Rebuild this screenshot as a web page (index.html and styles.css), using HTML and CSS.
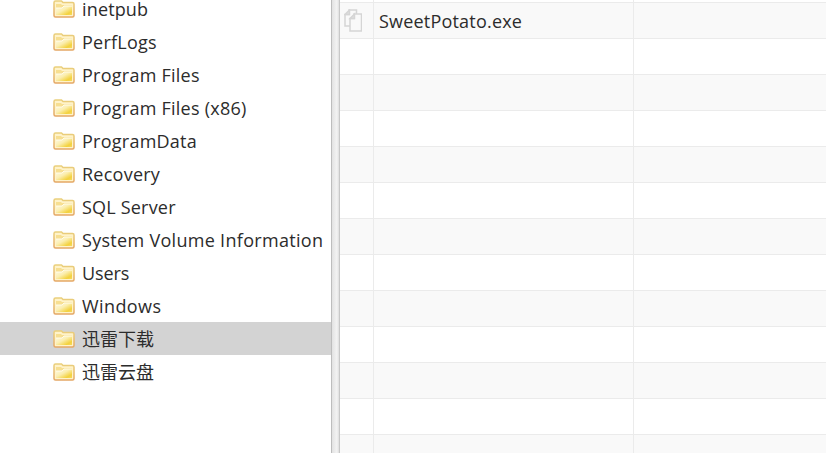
FILE: index.html
```
<!DOCTYPE html>
<html lang="zh"><head><meta charset="utf-8"><title>Files</title><link rel="stylesheet" href="styles.css"></head>
<body>
<svg class="defs"><defs>
<linearGradient id="gold" x1="0" y1="0" x2="1" y2="1"><stop offset="0" stop-color="#fffbe6"/><stop offset=".45" stop-color="#fbeeb0"/><stop offset=".8" stop-color="#f3d23e"/><stop offset="1" stop-color="#f6d860"/></linearGradient>
<linearGradient id="edge" x1="0" y1="0" x2="0" y2="1"><stop offset="0" stop-color="#ead07c"/><stop offset="1" stop-color="#e4a765"/></linearGradient>
<symbol id="folder" viewBox="0 0 22 18"><path d="M1 15.5V2.5Q1 1 2.5 1H8.500l1.500 1.500h9.500Q21 2.500 21 4v11.500q0 1.500-1.500 1.500h-17Q1 17 1 15.500Z" fill="#fff3c9" stroke="url(#edge)" stroke-width="1.500"/><path d="M3 4h5l1 1h10v3H3Z" fill="#f7df91"/><path d="M3 8h6l2-2h8v9H3Z" fill="url(#gold)"/><path d="M3 8h6l2-2h8" fill="none" stroke="#fffbe9"/></symbol>
<symbol id="copy" viewBox="0 0 18 23"><g fill="#f9f9f9" stroke="#d5d5d5" stroke-width="1.500"><path d="M5 1h7.500v16H1V5.500h4Z"/><path d="M1 5.500 5.500 1v4.500Z" fill="#dedede"/><path d="M10 5h7.500v17H6V9.500h4Z"/><path d="M6 9.500 10.500 5v4.500Z" fill="#dedede"/></g></symbol>
</defs></svg>
<main class="app"><ul class="tree" id="tree"></ul><div class="splitter"></div><div class="grid" id="grid"></div></main>
<script src="app.js"></script>
</body></html>
```
FILE: styles.css
```
body{margin:0;overflow:hidden;background:#fff;color:#2c2c2c;font:18px/33px "Open Sans","Noto Sans CJK SC",sans-serif}
.defs{position:absolute;width:0;height:0}
.app{display:flex;height:453px;overflow:hidden}
.tree{list-style:none;margin:-8px 0 0;padding:0;width:331px;flex:none}
.item{display:flex;align-items:center;height:33px;padding-left:53px;gap:7px;white-space:nowrap;box-sizing:border-box}
.item svg{width:22px;height:18px;flex:none}
.item span{line-height:31px;padding-top:2px}
.item:first-child svg{margin-top:0}
.selected{background:linear-gradient(#d3d3d3,#d3d3d3)}
.splitter{width:9px;flex:none;background:linear-gradient(90deg,#e2e2e2,#f3f3f3 70%,#dedede);border-left:1px solid #bdbdbd;border-right:1px solid #c8c8c8;box-sizing:border-box}
.grid{flex:1;margin-top:-33px}
.row{display:grid;grid-template-columns:34px 260px 1fr;height:36px;box-sizing:border-box;border-bottom:1px solid #ebebeb}
.row:nth-child(odd){background:#fff}
.row:nth-child(even){background:#f9f9f9}
.cell{border-right:1px solid #ebebeb}
.copy{display:block;width:18px;height:23px;margin:6px 0 0 4px}
.name{padding-left:5px;line-height:37px;letter-spacing:.2px}
```
FILE: app.js
```
const names=[["inetpub",.15],["PerfLogs",.25],["Program Files",.25],["Program Files (x86)",.25],["ProgramData",.25],["Recovery",.25],["SQL Server",.2],["System Volume Information",.3],["Users",-.1],["Windows",.4],["迅雷下载",0],["迅雷云盘",0]];
document.getElementById("tree").innerHTML=names.map(([n,s],i)=>`<li class="item${i===10?" selected":""}"><svg><use href="#folder"/></svg><span style="letter-spacing:${s}px">${n}</span></li>`).join("");
document.getElementById("grid").innerHTML=Array.from({length:14},(_,i)=>`<div class="row"><div class="cell">${i===1?'<svg class="copy"><use href="#copy"/></svg>':""}</div><div class="cell name">${i===1?"SweetPotato.exe":""}</div><div></div></div>`).join("");
```
